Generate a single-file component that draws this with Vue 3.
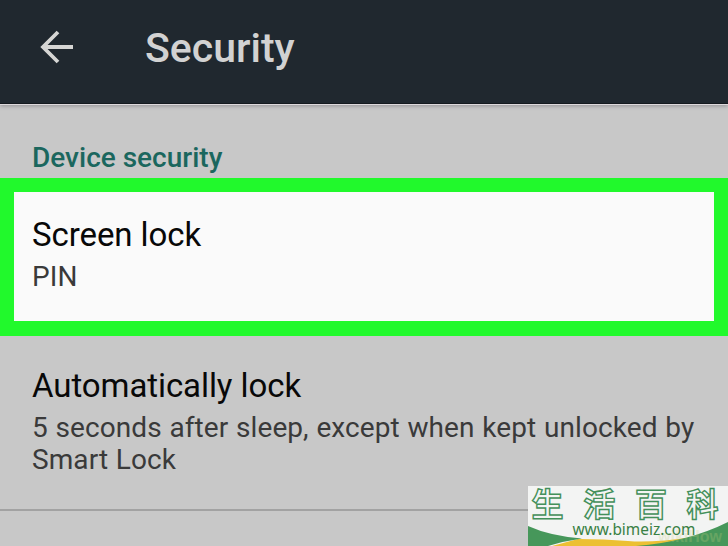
<template>
  <div class="screen">
    <header class="app-bar">
      <svg class="back" viewBox="0 0 34 34" width="34" height="34">
        <path d="M33 17H3M18 2L3 17l15 15" />
      </svg>
      <h1>Security</h1>
    </header>

    <main>
      <h2>Device security</h2>

      <section
        v-for="item in items"
        :key="item.title"
        class="item"
        :class="{ highlighted: item.highlighted }"
      >
        <div class="title">{{ item.title }}</div>
        <div class="summary">{{ item.summary }}</div>
      </section>
    </main>

    <svg class="badge" viewBox="0 0 200 60" width="200" height="60">
      <rect width="200" height="60" fill="#f3f4f3" />
      <path d="M50 53Q76 53 100 55T165 51L185 60H24z" fill="#ecc033" />
      <path d="M0 40Q22 50 54 52.5Q36 55 20 60H0z" fill="#46975a" />
      <path d="M108 60Q160 56 200 36V60z" fill="#46975a" />
      <text class="wiki" x="130" y="56">wikiHow</text>
      <g class="glyphs">
        <text v-for="(g, i) in glyphs" :key="g" :x="3.5 + i * 51.7" y="30">{{ g }}</text>
      </g>
      <text class="url" x="44.5" y="48.5" textLength="123" lengthAdjust="spacingAndGlyphs">www.bimeiz.com</text>
    </svg>
  </div>
</template>

<script setup>
const items = [
  { title: 'Screen lock', summary: 'PIN', highlighted: true },
  {
    title: 'Automatically lock',
    summary: '5 seconds after sleep, except when kept unlocked by Smart Lock'
  }
]

const glyphs = ['生', '活', '百', '科']
</script>

<style>
body { margin: 0; background: #c8c8c8; }
</style>

<style scoped>
.screen {
  position: relative; width: 728px; height: 546px; overflow: hidden;
  background: #c8c8c8; font-family: Roboto, "Liberation Sans", sans-serif;
}
.app-bar {
  display: flex; align-items: flex-start; box-sizing: border-box; height: 104px;
  padding-left: 40px; background: #20282f; border-bottom: 1px solid #14191e;
  box-shadow: 0 1px 0 #ddd9dc, 0 2px 4px #929094;
}
.back { margin-top: 30px; fill: none; stroke: #d6d6d4; stroke-width: 3.8; }
h1 {
  margin: 0 0 0 71px; font-size: 41px; font-weight: 500; line-height: 96px;
  color: #d2d2d2;
}
h2 {
  margin: 0; padding: 38px 0 4px 32px; font-size: 28px; font-weight: 500;
  line-height: 32px; color: #1b675e;
}
.item { box-sizing: border-box; padding: 30px 20px 33px 32px; border-bottom: 2px solid #a2a2a2; }
.item.highlighted {
  height: 158px; padding: 23px 18px; border: 14px solid #21f92c;
  border-bottom-width: 15px; background: #fafafa;
}
.title { font-size: 33px; line-height: 40px; letter-spacing: -.08px; color: #080808; }
.summary {
  margin-top: 6px; font-size: 28px; line-height: 32px; letter-spacing: .08px;
  word-spacing: .7px; color: #3a3a3a;
}
.badge { position: absolute; right: 0; bottom: 0; }
.glyphs text {
  font-family: "Noto Sans CJK SC", sans-serif; font-size: 32px; font-weight: 700;
  fill: #f3f4f3; stroke: #43905a; stroke-width: 1.4;
}
.url { font-family: "Noto Sans", sans-serif; font-size: 17px; fill: #398044; }
.wiki { font-family: "Liberation Sans", sans-serif; font-size: 16px; font-weight: 700; fill: #c9cf80; opacity: .25; }
</style>
